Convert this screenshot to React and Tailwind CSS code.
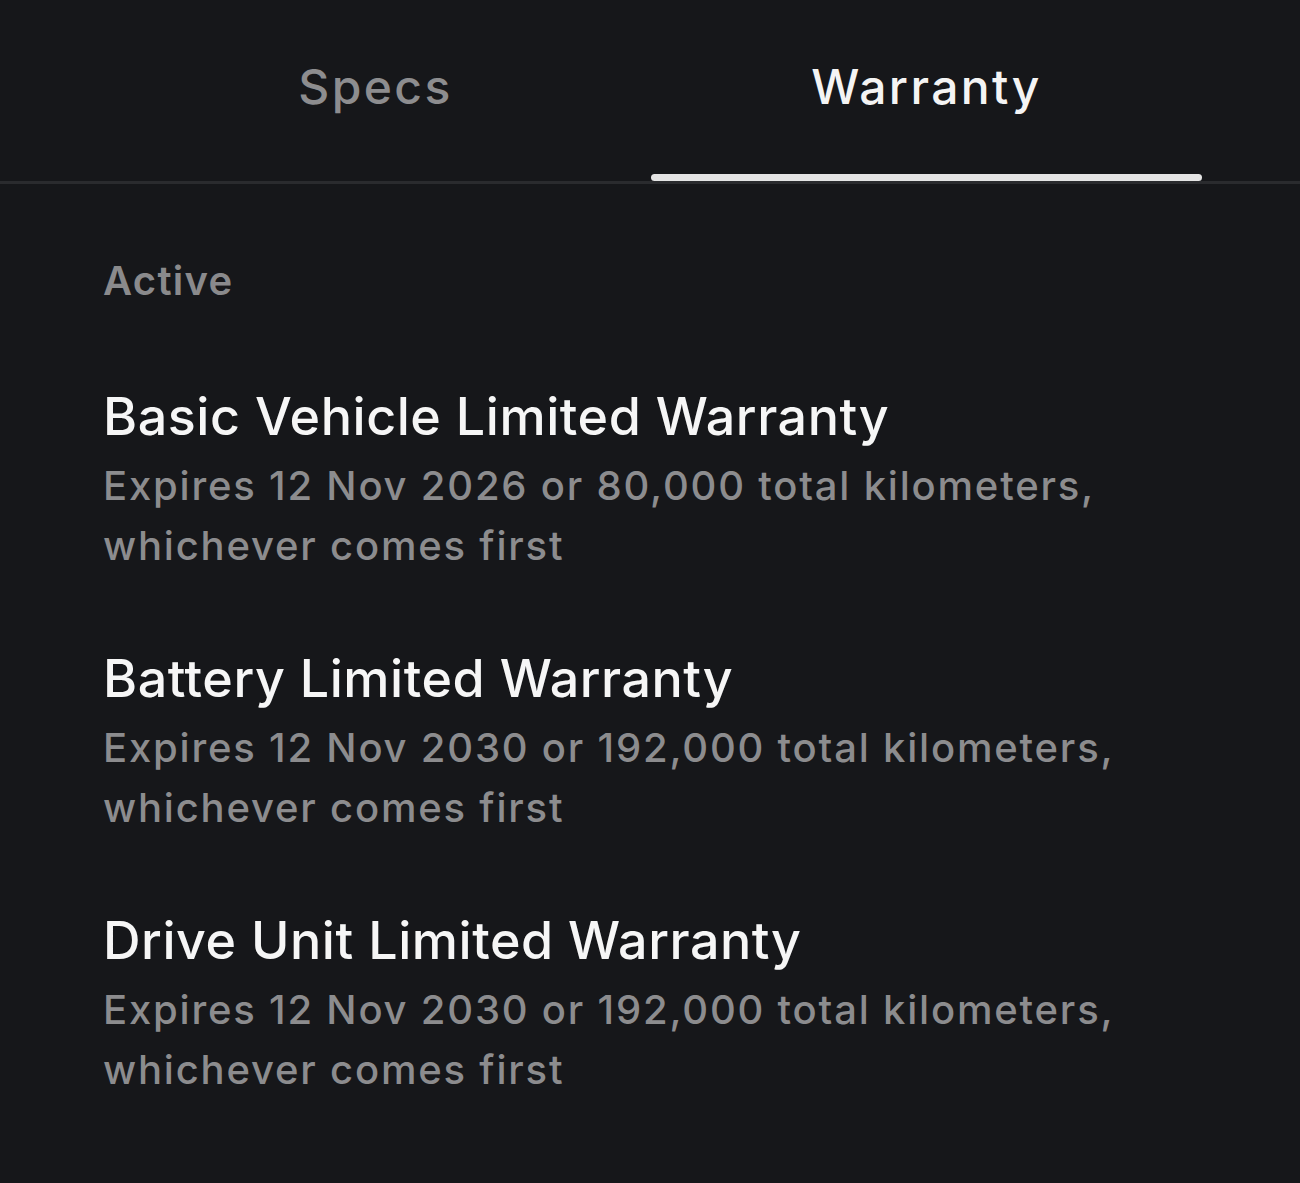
const warranties = [
  {
    title: "Basic Vehicle Limited Warranty",
    detail: "Expires 12 Nov 2026 or 80,000 total kilometers, whichever comes first",
  },
  {
    title: "Battery Limited Warranty",
    detail: "Expires 12 Nov 2030 or 192,000 total kilometers, whichever comes first",
  },
  {
    title: "Drive Unit Limited Warranty",
    detail: "Expires 12 Nov 2030 or 192,000 total kilometers, whichever comes first",
  },
];

const Tab = ({ label, active }) => (
  <div className="flex-1 flex flex-col items-center h-[181px]">
    <div
      className={`pt-[58px] text-[48px] leading-[58px] font-medium tracking-[2.4px] ${
        active ? "text-[#f4f4f4]" : "text-[#8d8d8f]"
      }`}
    >
      {label}
    </div>
    <div className={`mt-auto h-[7px] w-full rounded-full ${active ? "bg-[#e4e4e4]" : "bg-transparent"}`} />
  </div>
);

const App = () => {
  return (
    <div
      className="min-h-[1183px] w-full bg-[#16171a] text-white"
      style={{ fontFamily: "Inter, 'Noto Sans', sans-serif" }}
    >
      {/* tabs */}
      <div className="border-b-[3px] border-[#2a2b2e]">
        <div className="flex pl-[100px] pr-[98px]">
          <Tab label="Specs" />
          <Tab label="Warranty" active />
        </div>
      </div>

      <div className="pl-[103px] pt-[72px]">
        <p className="text-[40px] font-semibold text-[#8a8a8c] leading-[50px] tracking-[1.3px]">Active</p>

        <div className="mt-[81px] flex flex-col gap-[73px]">
          {warranties.map((w) => (
            <div key={w.title}>
              <h3 className="text-[52px] font-medium text-[#f6f6f6] leading-[60px] tracking-[0.55px]">
                {w.title}
              </h3>
              <p className="mt-[9px] max-w-[1080px] text-[40px] font-medium text-[#8c8c8e] leading-[60px] tracking-[1.8px]">
                {w.detail}
              </p>
            </div>
          ))}
        </div>
      </div>
    </div>
  );
};

export default App;
